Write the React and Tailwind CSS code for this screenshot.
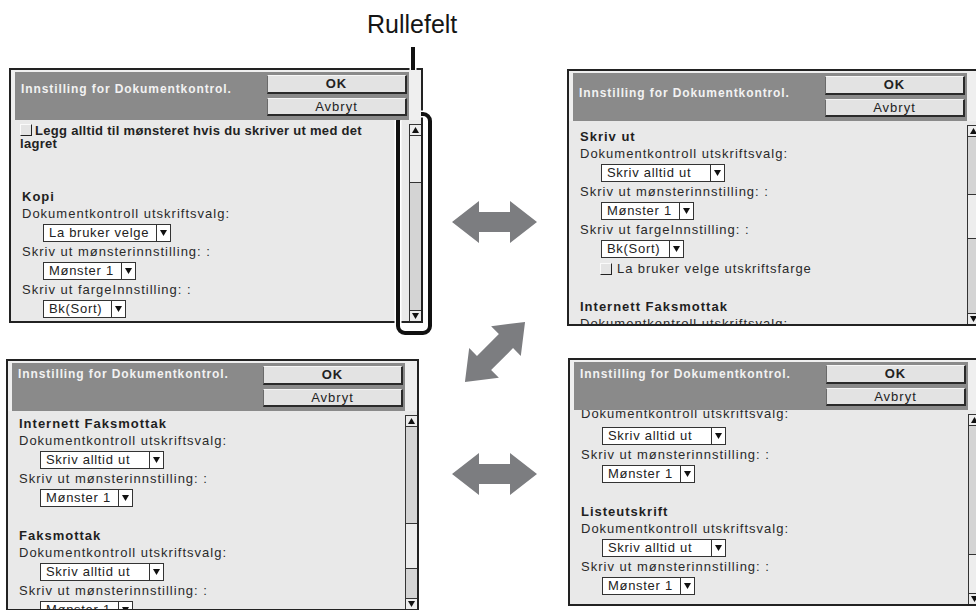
import React from "react";

const Tri = ({ up }) => (
  <svg width="7" height="6" viewBox="0 0 7 6" className="block">
    <polygon points={up ? "3.5,0 7,6 0,6" : "0,0 7,0 3.5,6"} fill="#111" />
  </svg>
);

const Checkbox = ({ className = "" }) => (
  <span className={`w-[12px] h-[12px] bg-[#e4e4e4] border-t border-l border-t-[#fafafa] border-l-[#fafafa] border-r border-b border-r-[#222] border-b-[#222] ${className}`} />
);

const Heading = ({ children }) => (
  <div className="h-[17px] leading-[17px] text-[13px] font-bold tracking-[1px] text-[#1f1f1f] whitespace-nowrap">{children}</div>
);

const Label = ({ children, className = "h-[18px]" }) => (
  <div className={`${className} leading-[18px] text-[13px] tracking-[1px] text-[#2a2a2a] whitespace-nowrap`}>{children}</div>
);

const Spacer = () => <div className="h-[19px]" />;

function Select({ value, w }) {
  return (
    <div className="h-[20px] flex items-center pl-[21px]">
      <div className={`${w} h-[18px] flex bg-white border border-[#333]`}>
        <div className="flex-1 pl-[5px] text-[13px] leading-[16px] tracking-[0.7px] text-[#222] whitespace-nowrap">{value}</div>
        <div className="w-[14px] border-l border-[#333] flex items-center justify-center">
          <Tri />
        </div>
      </div>
    </div>
  );
}

function Btn({ children, bold, h }) {
  return (
    <div className={`w-[140px] ${h} flex items-center justify-center bg-[#e3e3e3] border-t border-l border-t-[#f6f6f6] border-l-[#6a6a6a] border-r-2 border-b-2 border-r-[#2a2a2a] border-b-[#2a2a2a] text-[13px] tracking-[1px] text-[#222] ${bold ? "font-bold" : ""}`}>
      {children}
    </div>
  );
}

function Scrollbar({ thumb }) {
  return (
    <div className="w-[12px] shrink-0 mt-[4px] flex flex-col border-l border-t border-[#333] bg-[#d4d4d4]">
      <div className="h-[11px] shrink-0 bg-[#ececec] border-b border-[#333] flex items-center justify-center">
        <Tri up />
      </div>
      <div className="flex-1 min-h-0 overflow-hidden">
        <div className={`${thumb} bg-[#ededed] border-b border-[#333]`} />
      </div>
      <div className="h-[11px] shrink-0 bg-[#ececec] border-t border-[#333] flex items-center justify-center">
        <Tri />
      </div>
    </div>
  );
}

function Panel({ className, titlePt, thumb, children }) {
  return (
    <div className={`shrink-0 flex flex-col overflow-hidden border-2 border-[#222] bg-[#e9e9e9] ${className}`}>
      <div className="relative z-10 flex shrink-0 bg-[#efefef] pt-[2px] pl-[4px]">
        <div className="flex flex-1 justify-between h-[48px] bg-[#8a8a8a] pr-[2px]">
          <div className={`pl-[6px] ${titlePt} text-[12px] leading-[14px] font-bold tracking-[0.9px] text-[#f2f2f2] whitespace-nowrap`}>
            Innstilling for Dokumentkontrol.
          </div>
          <div className="flex flex-col gap-[4px] pt-[3px]">
            <Btn bold h="h-[19px]">OK</Btn>
            <Btn h="h-[18px]">Avbryt</Btn>
          </div>
        </div>
        <div className="w-[12px]" />
      </div>
      <div className="flex flex-1 min-h-0">
        <div className="flex-1 min-w-0 overflow-hidden">{children}</div>
        <Scrollbar thumb={thumb} />
      </div>
    </div>
  );
}

function HArrow({ className }) {
  return (
    <svg className={`shrink-0 ${className}`} width="85" height="42" viewBox="0 0 85 42">
      <polygon points="0,21 27,0 27,11 58,11 58,0 85,21 58,42 58,31 27,31 27,42" fill="#7c7d80" />
    </svg>
  );
}

export default function App() {
  return (
    <div className="relative w-[976px] h-[610px] overflow-hidden bg-white font-['Liberation_Sans',Arial,sans-serif]">
      <div className="h-[68px] pl-[367px] pt-[9px] text-[25px] leading-[30px] text-[#151515]">Rullefelt</div>

      <div className="flex items-start h-[290px]">
        <Panel className="ml-[9px] w-[414px] h-[255px]" titlePt="pt-[10px]" thumb="mt-0 h-[47px]">
          <div className="pt-[4px] pl-[9px]">
            <p className="text-[13px] leading-[13px] font-bold tracking-[0.3px] text-[#222] whitespace-nowrap">
              <Checkbox className="inline-block align-[-1px] mr-[3px]" />
              Legg alltid til mønsteret hvis du skriver ut med det
              <br />
              lagret
            </p>
          </div>
          <div className="pl-[11px] mt-[38px]">
            <Heading>Kopi</Heading>
            <Label>Dokumentkontroll utskriftsvalg:</Label>
            <Select value="La bruker velge" w="w-[128px]" />
            <Label>Skriv ut mønsterinnstilling: :</Label>
            <Select value="Mønster 1" w="w-[93px]" />
            <Label>Skriv ut fargeInnstilling: :</Label>
            <Select value="Bk(Sort)" w="w-[83px]" />
          </div>
        </Panel>

        <HArrow className="ml-[29px] mt-[133px]" />

        <Panel className="ml-[30px] mt-[1px] w-[414px] h-[257px]" titlePt="pt-[13px]" thumb="mt-[57px] h-[45px] border-t">
          <div className="pl-[11px] pt-[7px]">
            <Heading>Skriv ut</Heading>
            <Label>Dokumentkontroll utskriftsvalg:</Label>
            <Select value="Skriv alltid ut" w="w-[124px]" />
            <Label>Skriv ut mønsterinnstilling: :</Label>
            <Select value="Mønster 1" w="w-[93px]" />
            <Label>Skriv ut fargeInnstilling: :</Label>
            <Select value="Bk(Sort)" w="w-[83px]" />
            <div className="h-[20px] flex items-center pl-[20px]">
              <Checkbox className="block shrink-0" />
              <span className="ml-[5px] text-[13px] tracking-[0.9px] text-[#2a2a2a] whitespace-nowrap">La bruker velge utskriftsfarge</span>
            </div>
            <Spacer />
            <Heading>Internett Faksmottak</Heading>
            <Label>Dokumentkontroll utskriftsvalg:</Label>
          </div>
        </Panel>
      </div>

      <div className="flex items-start">
        <Panel className="ml-[6px] mt-[1px] w-[413px] h-[252px]" titlePt="pt-[4px]" thumb="mt-[96px] h-[46px] border-t">
          <div className="pl-[11px] pt-[4px]">
            <Heading>Internett Faksmottak</Heading>
            <Label>Dokumentkontroll utskriftsvalg:</Label>
            <Select value="Skriv alltid ut" w="w-[124px]" />
            <Label>Skriv ut mønsterinnstilling: :</Label>
            <Select value="Mønster 1" w="w-[93px]" />
            <Spacer />
            <Heading>Faksmottak</Heading>
            <Label>Dokumentkontroll utskriftsvalg:</Label>
            <Select value="Skriv alltid ut" w="w-[124px]" />
            <Label>Skriv ut mønsterinnstilling: :</Label>
            <Select value="Mønster 1" w="w-[93px]" />
          </div>
        </Panel>

        <HArrow className="ml-[33px] mt-[95px]" />

        <Panel className="ml-[31px] w-[414px] h-[248px]" titlePt="pt-[5px]" thumb="mt-[128px] h-[42px] border-t">
          <div className="pl-[11px] mt-[-5px]">
            <Label className="h-[21px]">Dokumentkontroll utskriftsvalg:</Label>
            <Select value="Skriv alltid ut" w="w-[124px]" />
            <Label>Skriv ut mønsterinnstilling: :</Label>
            <Select value="Mønster 1" w="w-[93px]" />
            <Spacer />
            <Heading>Listeutskrift</Heading>
            <Label>Dokumentkontroll utskriftsvalg:</Label>
            <Select value="Skriv alltid ut" w="w-[124px]" />
            <Label>Skriv ut mønsterinnstilling: :</Label>
            <Select value="Mønster 1" w="w-[93px]" />
          </div>
        </Panel>
      </div>

      {/* diagonal arrow between the rows */}
      <svg className="absolute left-[452px] top-[309px]" width="86" height="86" viewBox="0 0 86 86">
        <g transform="translate(43 43) rotate(-45) translate(-42.5 -21)">
          <polygon points="0,21 27,0 27,11 58,11 58,0 85,21 58,42 58,31 27,31 27,42" fill="#7c7d80" />
        </g>
      </svg>

      {/* scrollbar callout */}
      <svg className="absolute left-[390px] top-[40px]" width="50" height="300" viewBox="0 0 50 300">
        <line x1="23" y1="7" x2="23" y2="74" stroke="#fff" strokeWidth="7" />
        <rect x="8" y="74" width="32" height="219" rx="7" fill="none" stroke="#fff" strokeWidth="7" />
        <line x1="23" y1="7" x2="23" y2="74" stroke="#111" strokeWidth="4" />
        <rect x="8" y="74" width="32" height="219" rx="7" fill="none" stroke="#111" strokeWidth="4" />
        <circle cx="23" cy="74" r="4.5" fill="#111" />
      </svg>
    </div>
  );
}
